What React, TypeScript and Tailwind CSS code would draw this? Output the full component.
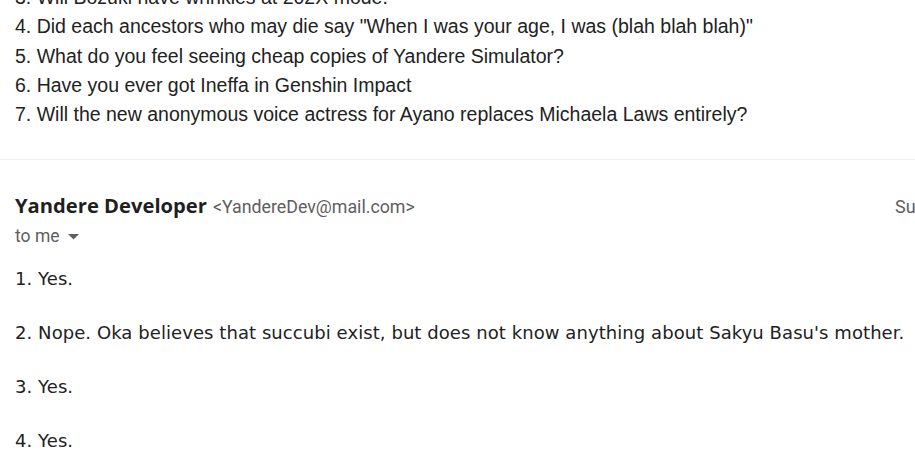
export default function App() {
  const questions = [
    '3. Will Bozuki have wrinkles at 202X mode.',
    '4. Did each ancestors who may die say "When I was your age, I was (blah blah blah)"',
    '5. What do you feel seeing cheap copies of Yandere Simulator?',
    '6. Have you ever got Ineffa in Genshin Impact',
    '7. Will the new anonymous voice actress for Ayano replaces Michaela Laws entirely?',
  ]
  const answers = [
    '1. Yes.',
    "2. Nope. Oka believes that succubi exist, but does not know anything about Sakyu Basu's mother.",
    '3. Yes.',
    '4. Yes.',
  ]

  return (
    <div className="h-[456px] w-[915px] overflow-hidden bg-white">
      <div className="mt-[-17px] pl-[15px] text-[19.5px] leading-[29.3px] text-[#222] font-['Liberation_Sans',Arial,sans-serif] whitespace-nowrap">
        {questions.map((q) => (
          <div key={q}>{q}</div>
        ))}
      </div>

      <div className="mt-[30px] border-t border-[#eceff1]" />

      <div className="pl-[15px] pt-[30px]">
        <div className="flex items-baseline justify-between whitespace-nowrap">
          <div className="flex items-baseline gap-[6px]">
            <span className="text-[20.2px] font-bold text-[#1f1f1f] font-['Open_Sans',sans-serif]">Yandere Developer</span>
            <span className="text-[17.8px] text-[#5e5e5e] font-['Roboto',sans-serif]">&lt;YandereDev@mail.com&gt;</span>
          </div>
          <span className="w-[20px] text-[18px] text-[#5e5e5e] font-['Roboto',sans-serif]">Sun, Jul 27, 10:42 AM</span>
        </div>
        <div className="mt-[2px] flex items-center gap-[8px] text-[17.5px] text-[#5e5e5e] font-['Roboto',sans-serif]">
          <span>to me</span>
          <svg width="11" height="6" viewBox="0 0 11 6" className="mt-[2px]">
            <path d="M0 0h11L5.5 5.5z" fill="#5e5e5e" />
          </svg>
        </div>

        <div className="mt-[16px] text-[18px] tracking-[0.07px] leading-[27px] text-[#222] font-['DejaVu_Sans',Verdana,sans-serif] whitespace-nowrap">
          {answers.map((a) => (
            <p key={a} className="mb-[27px]">{a}</p>
          ))}
        </div>
      </div>
    </div>
  )
}
